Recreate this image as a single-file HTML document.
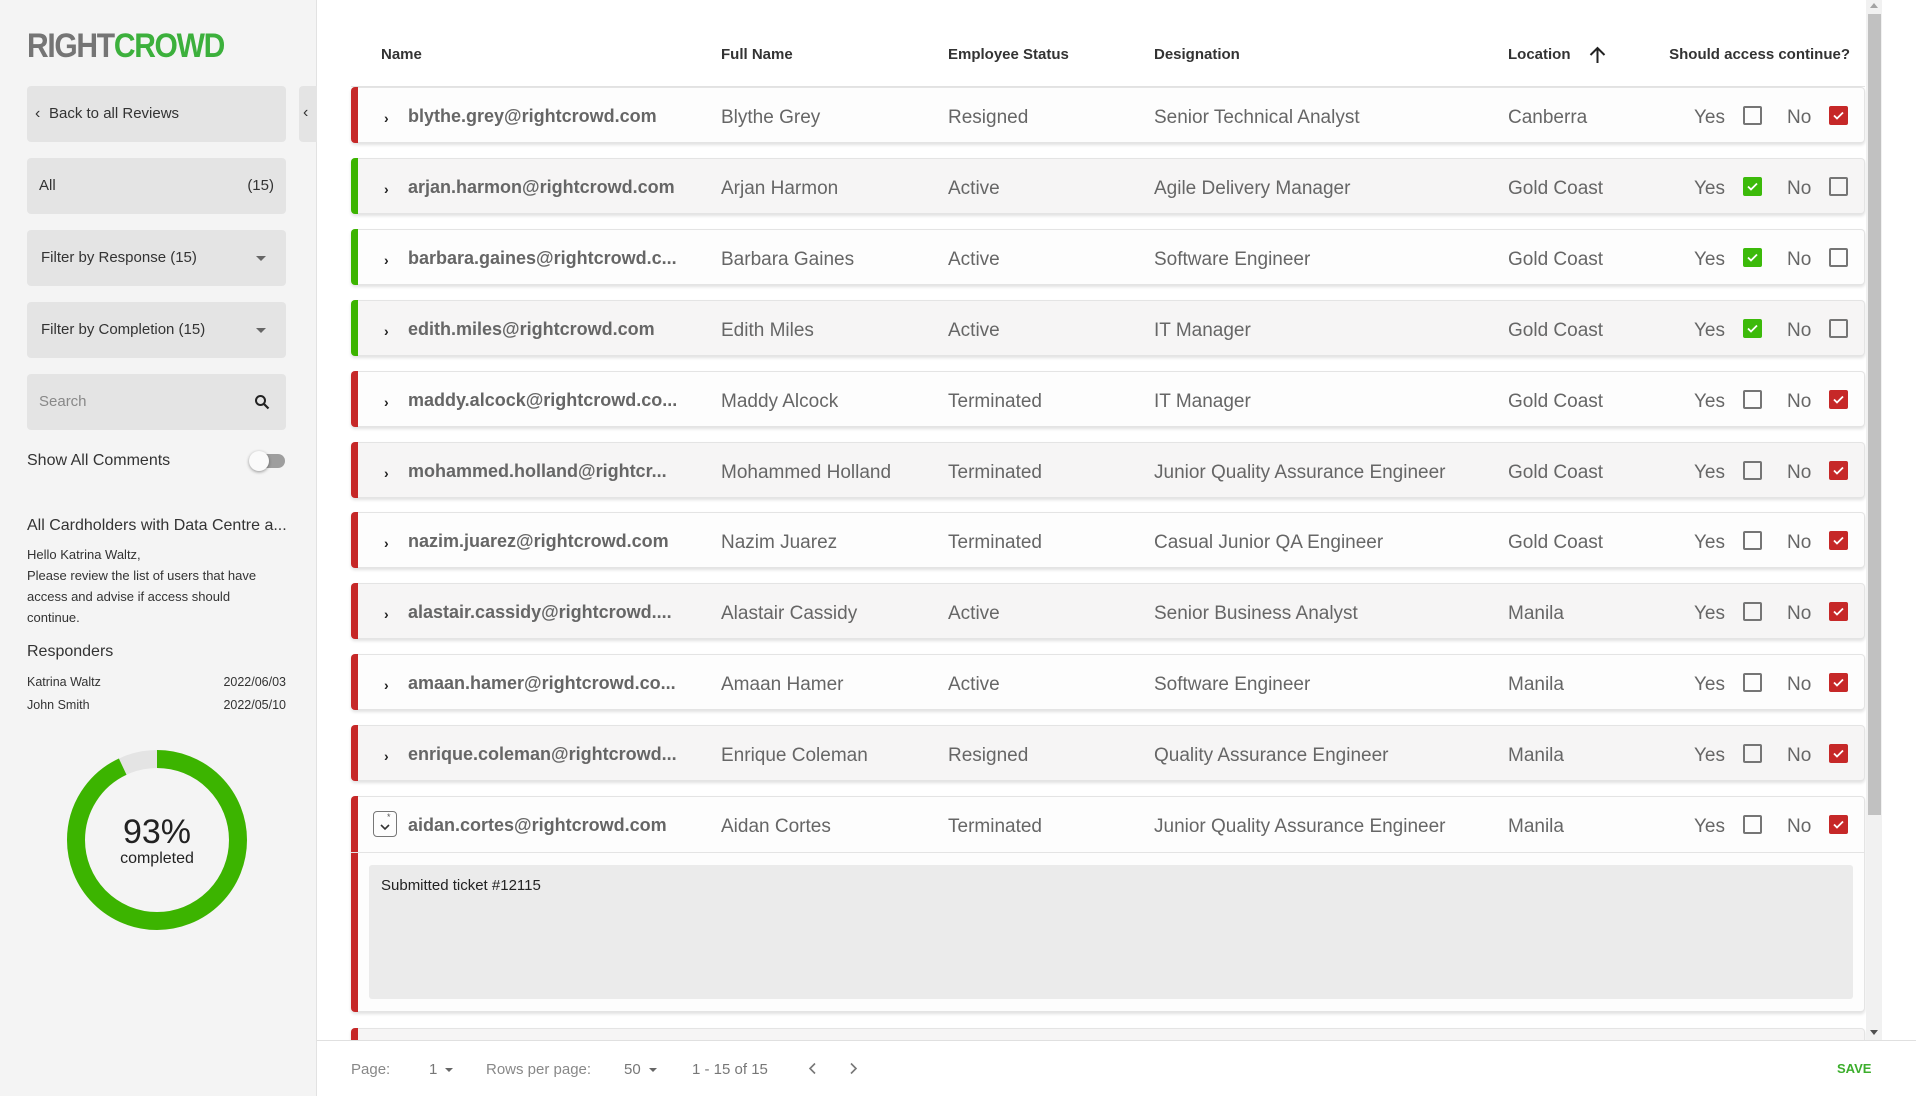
<!DOCTYPE html>
<html><head><meta charset="utf-8"><style>
*{box-sizing:border-box;margin:0;padding:0}
body{width:1916px;height:1096px;overflow:hidden;font-family:"Liberation Sans",Arial,sans-serif;background:#fff;position:relative;color:#333}
.abs{position:absolute}
#side{left:0;top:0;width:317px;height:1096px;background:#f4f4f4;border-right:1px solid #e2e2e2}
.btn{position:absolute;left:27px;width:259px;height:56px;background:#e4e4e4;border-radius:4px;font-size:15px;color:#333;line-height:56px;padding-left:14px}
.caret{position:absolute;right:20px;top:26px;width:0;height:0;border-left:5px solid transparent;border-right:5px solid transparent;border-top:5px solid #666}
.hdr{position:absolute;top:46px;font-size:15px;font-weight:bold;color:#333}
.row{position:absolute;left:351px;width:1514px;height:56px;border:1px solid #e4e4e4;border-left:none;border-radius:4px;box-shadow:0 2px 3px rgba(0,0,0,0.12)}
.row .bar{position:absolute;left:0;top:-1px;bottom:-1px;width:7px;border-radius:4px 0 0 4px}
.row span{position:absolute;top:3px;line-height:54px;font-size:19px;color:#666;white-space:nowrap}
.row .em{font-weight:bold;font-size:18px;line-height:50px;top:3px}
.row .chev{left:33px;font-size:14px;color:#222;font-weight:bold}
.cb{position:absolute;top:18px;width:19px;height:19px;border:2px solid #757575;border-radius:2px}
.cb.r{background:#c62828;border-color:#c62828}
.cb.g{background:#3cba0a;border-color:#3cba0a}
.cb svg{position:absolute;left:0;top:0}
.ft{position:absolute;top:1061px;font-size:15px;color:#888}
.dd{display:inline-block;width:0;height:0;border-left:4px solid transparent;border-right:4px solid transparent;border-top:4px solid #666;margin-left:8px;vertical-align:middle}
</style></head><body>
<div id="side" class="abs">
  <div class="abs" style="left:27px;top:27px;font-size:30px;font-weight:bold;letter-spacing:-1.3px;line-height:34px;transform:scaleY(1.15);transform-origin:left top"><span style="color:#757575">RIGHT</span><span style="color:#3cb03c">CROWD</span></div>
  <div class="btn" style="top:86px;padding-left:22px">Back to all Reviews<span style="position:absolute;left:8px;top:0;font-size:16px">&lsaquo;</span></div>
  <div class="abs" style="left:299px;top:86px;width:18px;height:56px;background:#e4e4e4;border-radius:4px 0 0 4px;line-height:54px;font-size:16px;padding-left:4px">&lsaquo;</div>
  <div class="btn" style="top:158px;font-size:15px;padding-left:12px">All<span style="position:absolute;right:12px">(15)</span></div>
  <div class="btn" style="top:230px">Filter by Response (15)<span class="caret"></span></div>
  <div class="btn" style="top:302px">Filter by Completion (15)<span class="caret"></span></div>
  <div class="btn" style="top:374px;color:#888;padding-left:12px">Search
    <svg style="position:absolute;right:16px;top:20px" width="16" height="16" viewBox="0 0 16 16"><circle cx="6.5" cy="6.5" r="4.5" fill="none" stroke="#222" stroke-width="2"/><line x1="10" y1="10" x2="14.5" y2="14.5" stroke="#222" stroke-width="2.2"/></svg></div>
  <div class="abs" style="left:27px;top:452px;font-size:16px;color:#333">Show All Comments</div>
  <div class="abs" style="left:255px;top:454px;width:30px;height:14px;border-radius:7px;background:#9e9e9e"></div>
  <div class="abs" style="left:249px;top:451px;width:20px;height:20px;border-radius:50%;background:#fafafa;box-shadow:0 1px 3px rgba(0,0,0,.4)"></div>
  <div class="abs" style="left:27px;top:517px;font-size:16px;color:#333">All Cardholders with Data Centre a...</div>
  <div class="abs" style="left:27px;top:544px;font-size:13px;line-height:21px;color:#333;width:250px">Hello Katrina Waltz,<br>Please review the list of users that have access and advise if access should continue.</div>
  <div class="abs" style="left:27px;top:643px;font-size:16px;color:#333">Responders</div>
  <div class="abs" style="left:27px;top:675px;width:259px;font-size:12.5px;color:#333">Katrina Waltz<span style="float:right">2022/06/03</span></div>
  <div class="abs" style="left:27px;top:698px;width:259px;font-size:12.5px;color:#333">John Smith<span style="float:right">2022/05/10</span></div>
  <svg class="abs" style="left:62px;top:745px" width="190" height="190" viewBox="0 0 190 190">
    <circle cx="95" cy="95" r="81" fill="none" stroke="#e4e4e4" stroke-width="18"/>
    <circle cx="95" cy="95" r="81" fill="none" stroke="#3cb400" stroke-width="18" stroke-dasharray="473.3 508.9" transform="rotate(-90 95 95)"/>
    <text x="95" y="98" text-anchor="middle" font-family="Liberation Sans" font-size="34" fill="#222">93%</text>
    <text x="95" y="118" text-anchor="middle" font-family="Liberation Sans" font-size="16" fill="#222">completed</text>
  </svg>
</div>

<div class="hdr" style="left:381px">Name</div>
<div class="hdr" style="left:721px">Full Name</div>
<div class="hdr" style="left:948px">Employee Status</div>
<div class="hdr" style="left:1154px">Designation</div>
<div class="hdr" style="left:1508px">Location</div>
<svg class="abs" style="left:1588px;top:46px" width="19" height="17" viewBox="0 0 19 17"><path d="M9.5 17V2M2.5 9l7-7 7 7" fill="none" stroke="#222" stroke-width="2"/></svg>
<div class="hdr" style="left:1600px;width:250px;text-align:right">Should access continue?</div>
<div class="abs" style="left:351px;top:86px;width:1514px;height:1px;background:#e4e4e4"></div>

<div id="rows"></div>

<div class="abs" style="left:1866px;top:0;width:16px;height:1040px;background:#f1f1f1"></div>
<div class="abs" style="left:1868px;top:14px;width:13px;height:801px;background:#c1c1c1"></div>
<div class="abs" style="left:1870px;top:3px;border-left:4px solid transparent;border-right:4px solid transparent;border-bottom:5px solid #a3a3a3"></div>
<div class="abs" style="left:1870px;top:1030px;border-left:4px solid transparent;border-right:4px solid transparent;border-top:5px solid #505050"></div>

<div class="abs" style="left:317px;top:1040px;width:1599px;height:56px;background:#fff;border-top:1px solid #e0e0e0"></div>
<div class="ft" style="left:351px">Page:</div>
<div class="ft" style="left:429px;color:#777">1<span class="dd"></span></div>
<div class="ft" style="left:486px">Rows per page:</div>
<div class="ft" style="left:624px;color:#777">50<span class="dd"></span></div>
<div class="ft" style="left:692px;color:#777">1 - 15 of 15</div>
<svg class="abs" style="left:808px;top:1062px" width="10" height="13"><path d="M7 1.5L2 6.5l5 5" fill="none" stroke="#777" stroke-width="1.6"/></svg>
<svg class="abs" style="left:848px;top:1062px" width="10" height="13"><path d="M3 1.5l5 5-5 5" fill="none" stroke="#777" stroke-width="1.6"/></svg>
<div class="abs" style="left:1837px;top:1061px;font-size:13px;font-weight:bold;color:#3cae2c">SAVE</div>

<script>
const R='#c62828',G='#3cb400';
const d=[
['blythe.grey@rightcrowd.com','Blythe Grey','Resigned','Senior Technical Analyst','Canberra',0],
['arjan.harmon@rightcrowd.com','Arjan Harmon','Active','Agile Delivery Manager','Gold Coast',1],
['barbara.gaines@rightcrowd.c...','Barbara Gaines','Active','Software Engineer','Gold Coast',1],
['edith.miles@rightcrowd.com','Edith Miles','Active','IT Manager','Gold Coast',1],
['maddy.alcock@rightcrowd.co...','Maddy Alcock','Terminated','IT Manager','Gold Coast',0],
['mohammed.holland@rightcr...','Mohammed Holland','Terminated','Junior Quality Assurance Engineer','Gold Coast',0],
['nazim.juarez@rightcrowd.com','Nazim Juarez','Terminated','Casual Junior QA Engineer','Gold Coast',0],
['alastair.cassidy@rightcrowd....','Alastair Cassidy','Active','Senior Business Analyst','Manila',0],
['amaan.hamer@rightcrowd.co...','Amaan Hamer','Active','Software Engineer','Manila',0],
['enrique.coleman@rightcrowd...','Enrique Coleman','Resigned','Quality Assurance Engineer','Manila',0],
['aidan.cortes@rightcrowd.com','Aidan Cortes','Terminated','Junior Quality Assurance Engineer','Manila',0]];
const ck='<svg width="15" height="15" viewBox="0 0 15 15"><path d="M3 7.5l3 3 6-6" fill="none" stroke="#fff" stroke-width="1.8"/></svg>';
let h='';
d.forEach((r,i)=>{
 const top=87+i*70.9, last=i==10;
 const bg=i%2?'#f6f5f5':'#fdfdfd';
 h+=`<div class="row" style="top:${top}px;height:${last?1012-top:56}px;background:${bg}"><div class="bar" style="background:${r[5]?G:R}"></div>`;
 if(last){h+=`<div style="position:absolute;left:22px;top:14px;width:24px;height:26px;border:1px solid #777;border-radius:4px"><svg width="22" height="24" viewBox="0 0 22 24"><path d="M7 13l4 4 4-4" fill="none" stroke="#333" stroke-width="1.6"/><text x="13" y="8" font-size="9" fill="#555" font-family="Liberation Sans">*</text></svg></div>`;}
 else h+=`<span class="chev">&rsaquo;</span>`;
 h+=`<span class="em" style="left:57px">${r[0]}</span><span style="left:370px">${r[1]}</span><span style="left:597px">${r[2]}</span><span style="left:803px">${r[3]}</span><span style="left:1157px">${r[4]}</span><span style="left:1343px">Yes</span><span style="left:1436px">No</span>`;
 h+=`<div class="cb ${r[5]?'g':''}" style="left:1392px">${r[5]?ck:''}</div><div class="cb ${r[5]?'':'r'}" style="left:1478px">${r[5]?'':ck}</div>`;
 if(last){h+=`<div style="position:absolute;left:0;right:0;top:55px;height:1px;background:#e4e4e4"></div><div style="position:absolute;left:18px;top:68px;width:1484px;height:134px;background:#ebebeb;border-radius:3px;padding:12px 12px"><span style="position:static;font-size:15px;color:#222;line-height:18px">Submitted ticket #12115</span></div>`;}
 h+='</div>';
});
h+=`<div class="row" style="top:1028px;height:40px;background:#f6f5f5"><div class="bar" style="background:${R}"></div></div>`;
document.getElementById('rows').innerHTML=h;
</script>
</body></html>
